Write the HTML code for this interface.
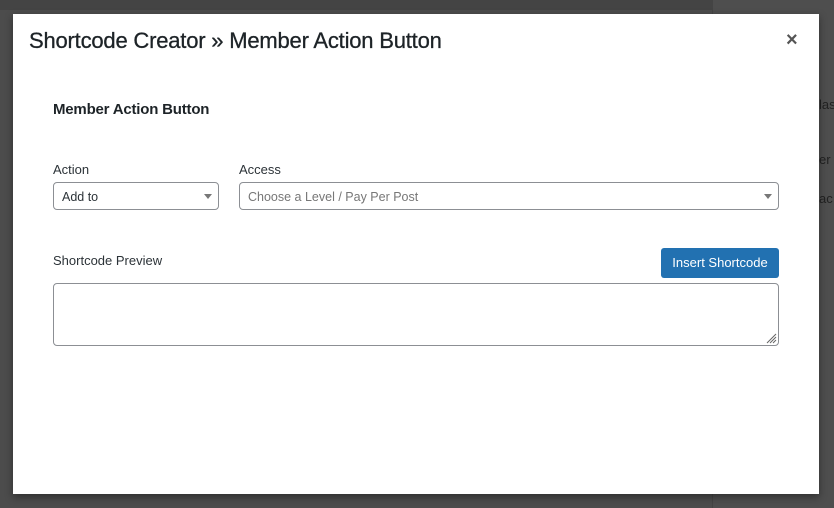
<!DOCTYPE html>
<html><head><style>
*{margin:0;padding:0;box-sizing:border-box}
body{width:834px;height:508px;background:#4c4c4c;font-family:"Liberation Sans",sans-serif;position:relative;overflow:hidden;color:#1d2327}
.bgtop{position:absolute;left:0;top:0;width:834px;height:10px;background:#444}
.bgside{position:absolute;left:712px;top:0;width:122px;height:508px;background:#4e4e4e;border-left:1px solid #444}
.bgside span{position:absolute;left:106px;color:#222;font-size:13px}
.modal{position:absolute;left:13px;top:14px;width:806px;height:480px;background:#fff;box-shadow:0 3px 8px rgba(0,0,0,.4)}
.t{position:absolute;left:16px;top:14px;font-size:22px;font-weight:normal;letter-spacing:-0.2px;color:#1d2327;-webkit-text-stroke:0.3px #1d2327}
.x{position:absolute;left:773px;top:15px;font-size:20px;font-weight:bold;color:#555}
.h{position:absolute;left:40px;top:87px;font-size:15px;font-weight:bold;letter-spacing:-0.2px}
.l{position:absolute;font-size:13px;color:#2c3338}
.sel{position:absolute;height:28px;border:1px solid #8c8f94;border-radius:4px;font-size:12.5px;padding:7px 8px}
.sel:after{content:"";position:absolute;right:6px;top:11px;border-left:4px solid transparent;border-right:4px solid transparent;border-top:5px solid #777}
.btn{position:absolute;left:648px;top:234px;width:118px;height:30px;background:#2271b1;border-radius:3px;color:#fff;font-size:13px;text-align:center;line-height:30px}
.ta{position:absolute;left:40px;top:269px;width:726px;height:63px;border:1px solid #8c8f94;border-radius:4px}
</style></head><body>
<div class="bgtop"></div>
<div class="bgside"><span style="top:97px">las</span><span style="top:152px">er</span><span style="top:191px">ac</span></div>
<div class="modal">
<div class="t">Shortcode Creator » Member Action Button</div>
<div class="x">×</div>
<div class="h">Member Action Button</div>
<div class="l" style="left:40px;top:148px">Action</div>
<div class="l" style="left:226px;top:148px">Access</div>
<div class="sel" style="left:40px;top:168px;width:166px;color:#2c3338">Add to</div>
<div class="sel" style="left:226px;top:168px;width:540px;color:#777">Choose a Level / Pay Per Post</div>
<div class="l" style="left:40px;top:239px">Shortcode Preview</div>
<div class="btn">Insert Shortcode</div>
<div class="ta"><svg style="position:absolute;right:1px;bottom:1px" width="12" height="12"><path d="M11 2L2 11M11 5L5 11M11 8L8 11" stroke="#666" stroke-width="1"/></svg></div>
</div>
</body></html>
